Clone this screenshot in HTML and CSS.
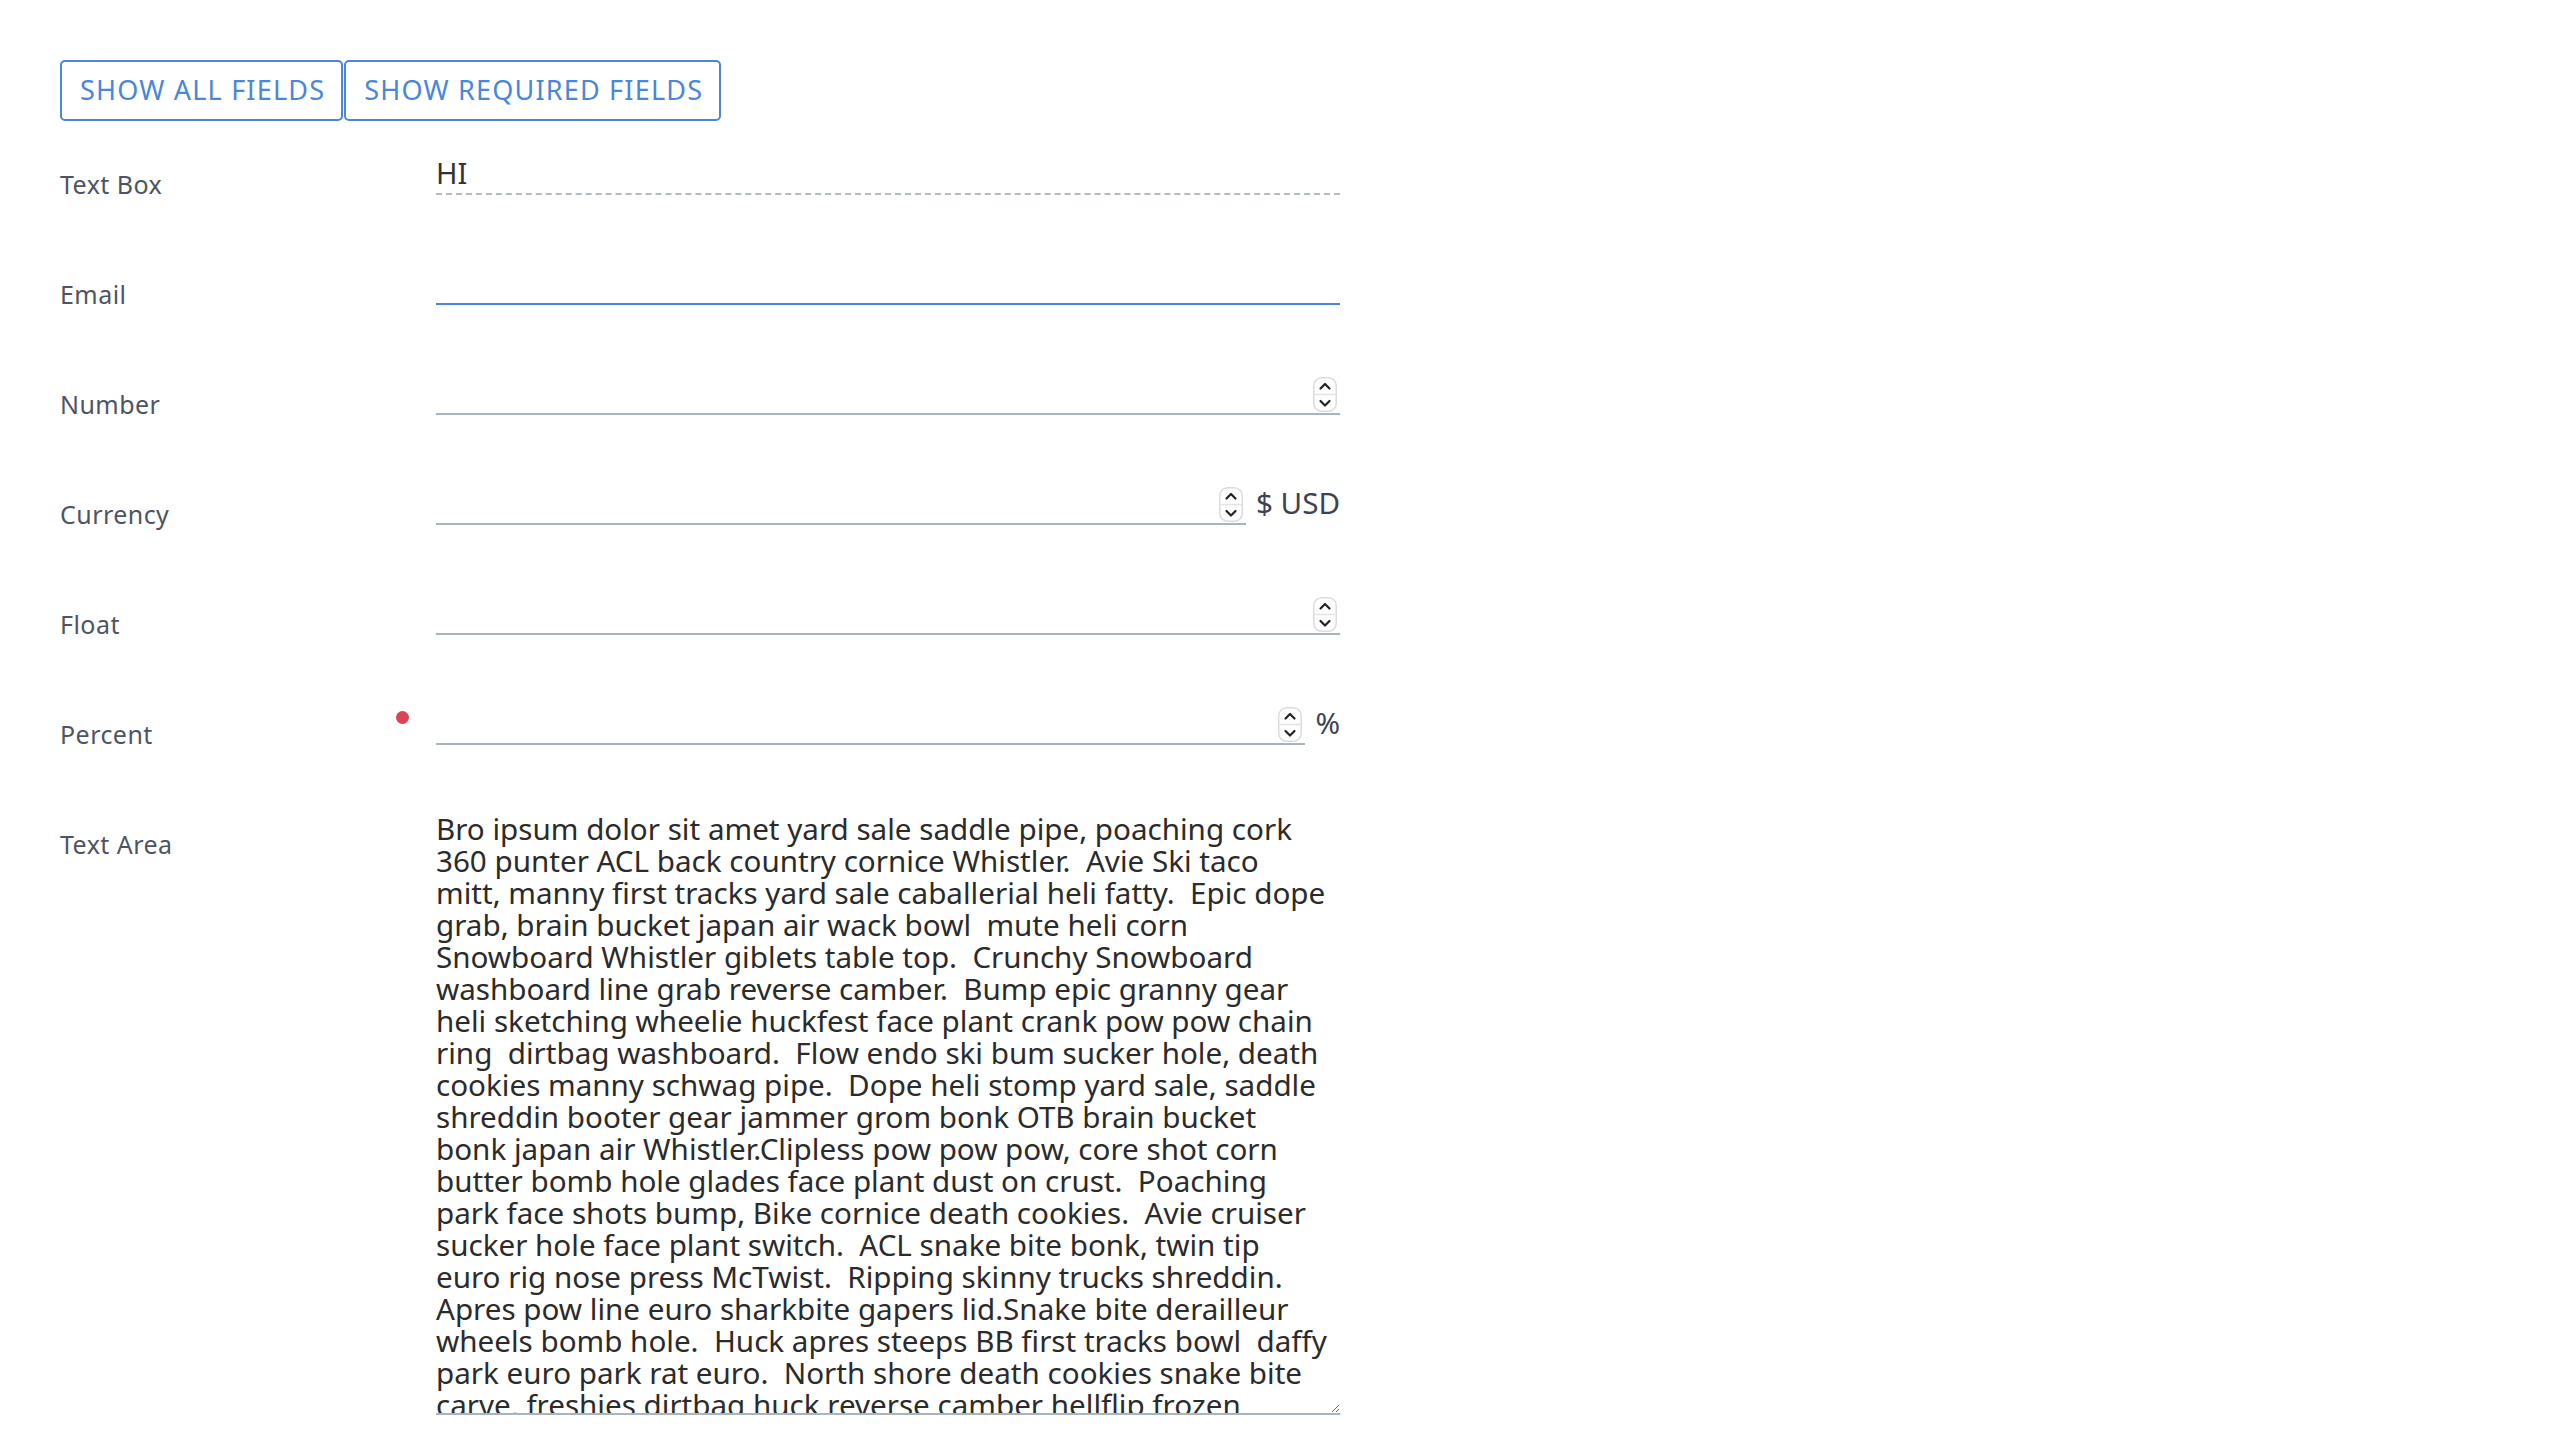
FILE: index.html
```html
<!DOCTYPE html>
<html lang="en">
<head>
<meta charset="utf-8">
<title>Form fields</title>
<link rel="stylesheet" href="styles.css">
</head>
<body>
<div class="page">
  <div class="toolbar">
    <button type="button" class="btn">SHOW ALL FIELDS</button>
    <button type="button" class="btn">SHOW REQUIRED FIELDS</button>
  </div>

  <form class="form">
    <div class="row">
      <div class="label-col"><label class="label">Text Box</label></div>
      <div class="field">
        <div class="control"><input class="input input-dashed" type="text" value="HI" readonly></div>
      </div>
    </div>

    <div class="row">
      <div class="label-col"><label class="label">Email</label></div>
      <div class="field">
        <div class="control"><input class="input input-active" type="email"></div>
      </div>
    </div>

    <div class="row">
      <div class="label-col"><label class="label">Number</label></div>
      <div class="field">
        <div class="control">
          <input class="input" type="number">
          <svg class="spinner" width="24" height="35" viewBox="0 0 24 35"><rect x="0.75" y="0.75" width="22.5" height="33.5" rx="8" fill="#fff" stroke="#dcdcdc" stroke-width="1.5"/><line x1="1.5" y1="17.5" x2="22.5" y2="17.5" stroke="#e3e3e3" stroke-width="1.5"/><path d="M7.5 11.5 L12 7 L16.5 11.5" fill="none" stroke="#222" stroke-width="2.2" stroke-linecap="round" stroke-linejoin="round"/><path d="M7.5 24 L12 28.5 L16.5 24" fill="none" stroke="#222" stroke-width="2.2" stroke-linecap="round" stroke-linejoin="round"/></svg>
        </div>
      </div>
    </div>

    <div class="row">
      <div class="label-col"><label class="label">Currency</label></div>
      <div class="field">
        <div class="control">
          <input class="input" type="number">
          <svg class="spinner" width="24" height="35" viewBox="0 0 24 35"><rect x="0.75" y="0.75" width="22.5" height="33.5" rx="8" fill="#fff" stroke="#dcdcdc" stroke-width="1.5"/><line x1="1.5" y1="17.5" x2="22.5" y2="17.5" stroke="#e3e3e3" stroke-width="1.5"/><path d="M7.5 11.5 L12 7 L16.5 11.5" fill="none" stroke="#222" stroke-width="2.2" stroke-linecap="round" stroke-linejoin="round"/><path d="M7.5 24 L12 28.5 L16.5 24" fill="none" stroke="#222" stroke-width="2.2" stroke-linecap="round" stroke-linejoin="round"/></svg>
        </div>
        <span class="suffix">$ USD</span>
      </div>
    </div>

    <div class="row">
      <div class="label-col"><label class="label">Float</label></div>
      <div class="field">
        <div class="control">
          <input class="input" type="number" step="any">
          <svg class="spinner" width="24" height="35" viewBox="0 0 24 35"><rect x="0.75" y="0.75" width="22.5" height="33.5" rx="8" fill="#fff" stroke="#dcdcdc" stroke-width="1.5"/><line x1="1.5" y1="17.5" x2="22.5" y2="17.5" stroke="#e3e3e3" stroke-width="1.5"/><path d="M7.5 11.5 L12 7 L16.5 11.5" fill="none" stroke="#222" stroke-width="2.2" stroke-linecap="round" stroke-linejoin="round"/><path d="M7.5 24 L12 28.5 L16.5 24" fill="none" stroke="#222" stroke-width="2.2" stroke-linecap="round" stroke-linejoin="round"/></svg>
        </div>
      </div>
    </div>

    <div class="row">
      <div class="label-col"><label class="label">Percent</label><span class="required-dot"></span></div>
      <div class="field">
        <div class="control">
          <input class="input" type="number">
          <svg class="spinner" width="24" height="35" viewBox="0 0 24 35"><rect x="0.75" y="0.75" width="22.5" height="33.5" rx="8" fill="#fff" stroke="#dcdcdc" stroke-width="1.5"/><line x1="1.5" y1="17.5" x2="22.5" y2="17.5" stroke="#e3e3e3" stroke-width="1.5"/><path d="M7.5 11.5 L12 7 L16.5 11.5" fill="none" stroke="#222" stroke-width="2.2" stroke-linecap="round" stroke-linejoin="round"/><path d="M7.5 24 L12 28.5 L16.5 24" fill="none" stroke="#222" stroke-width="2.2" stroke-linecap="round" stroke-linejoin="round"/></svg>
        </div>
        <span class="suffix">%</span>
      </div>
    </div>

    <div class="row">
      <div class="label-col"><label class="label">Text Area</label></div>
      <div class="field">
        <textarea class="textarea" wrap="off">Bro ipsum dolor sit amet yard sale saddle pipe, poaching cork
360 punter ACL back country cornice Whistler.  Avie Ski taco
mitt, manny first tracks yard sale caballerial heli fatty.  Epic dope
grab, brain bucket japan air wack bowl  mute heli corn
Snowboard Whistler giblets table top.  Crunchy Snowboard
washboard line grab reverse camber.  Bump epic granny gear
heli sketching wheelie huckfest face plant crank pow pow chain
ring  dirtbag washboard.  Flow endo ski bum sucker hole, death
cookies manny schwag pipe.  Dope heli stomp yard sale, saddle
shreddin booter gear jammer grom bonk OTB brain bucket
bonk japan air Whistler.Clipless pow pow pow, core shot corn
butter bomb hole glades face plant dust on crust.  Poaching
park face shots bump, Bike cornice death cookies.  Avie cruiser
sucker hole face plant switch.  ACL snake bite bonk, twin tip
euro rig nose press McTwist.  Ripping skinny trucks shreddin.
Apres pow line euro sharkbite gapers lid.Snake bite derailleur
wheels bomb hole.  Huck apres steeps BB first tracks bowl  daffy
park euro park rat euro.  North shore death cookies snake bite
carve, freshies dirtbag huck reverse camber hellflip frozen
chowder.  Gaper gnar shred granny gear bro gondy pow.
Sharkbite bomb hole hardtail, clipless euro carve.</textarea>
      </div>
    </div>
  </form>
</div>
</body>
</html>
```
FILE: styles.css
```css
* {
  box-sizing: border-box;
}

html, body {
  margin: 0;
  background: #ffffff;
}

body {
  font-family: "Noto Sans", "Open Sans", sans-serif;
  color: #333;
}

.page {
  padding: 60px 60px 0 60px;
}

.toolbar {
  display: flex;
  gap: 1px;
  margin-bottom: 30px;
}

.btn {
  font-family: "Noto Sans", "Open Sans", sans-serif;
  font-size: 27px;
  letter-spacing: 1.2px;
  line-height: 32px;
  color: #4a86d9;
  background: #fff;
  border: 2px solid #4a86d9;
  border-radius: 5px;
  padding: 12px 16px 13px 18px;
  cursor: pointer;
}

.form {
  display: flex;
  flex-direction: column;
  width: 1280px;
}

.row {
  display: flex;
  align-items: flex-start;
  margin-bottom: 66px;
}

.label-col {
  width: 376px;
  height: 44px;
  flex: none;
  display: flex;
  align-items: flex-start;
}

.label {
  font-size: 25px;
  letter-spacing: 0.45px;
  line-height: 30px;
  margin-top: 18px;
  color: #4f5465;
}

.required-dot {
  width: 13px;
  height: 13px;
  border-radius: 50%;
  background: #dc4453;
  margin-left: auto;
  margin-right: 27px;
  margin-top: 10px;
}

.field {
  width: 904px;
  display: flex;
  align-items: center;
}

.control {
  position: relative;
  flex: 1;
  min-width: 0;
}

.input {
  display: block;
  width: 100%;
  height: 44px;
  font-family: "Noto Sans", "Open Sans", sans-serif;
  font-size: 29px;
  line-height: 32px;
  color: #333;
  border: none;
  border-bottom: 2px solid #a9b4bc;
  padding: 5px 0;
  background: transparent;
  outline: none;
  -moz-appearance: textfield;
}

.input::-webkit-inner-spin-button,
.input::-webkit-outer-spin-button {
  -webkit-appearance: none;
  margin: 0;
}

.input-dashed {
  border-bottom: 2px dashed #b3bcc3;
}

.input-active {
  border-bottom-color: #4a86d9;
}

.spinner {
  position: absolute;
  right: 3px;
  top: 6px;
}

.suffix {
  flex: none;
  margin-left: 10px;
  font-size: 29.6px;
  line-height: 32px;
  color: #3d434f;
  padding-bottom: 1px;
}

.textarea {
  display: block;
  width: 904px;
  height: 604px;
  font-family: "Noto Sans", "Open Sans", sans-serif;
  font-size: 29.6px;
  line-height: 32px;
  color: #2b2b2b;
  border: none;
  border-bottom: 2px solid #a9b4bc;
  padding: 2px 0 0 0;
  background: transparent;
  outline: none;
  resize: vertical;
  overflow: hidden;
}
```
